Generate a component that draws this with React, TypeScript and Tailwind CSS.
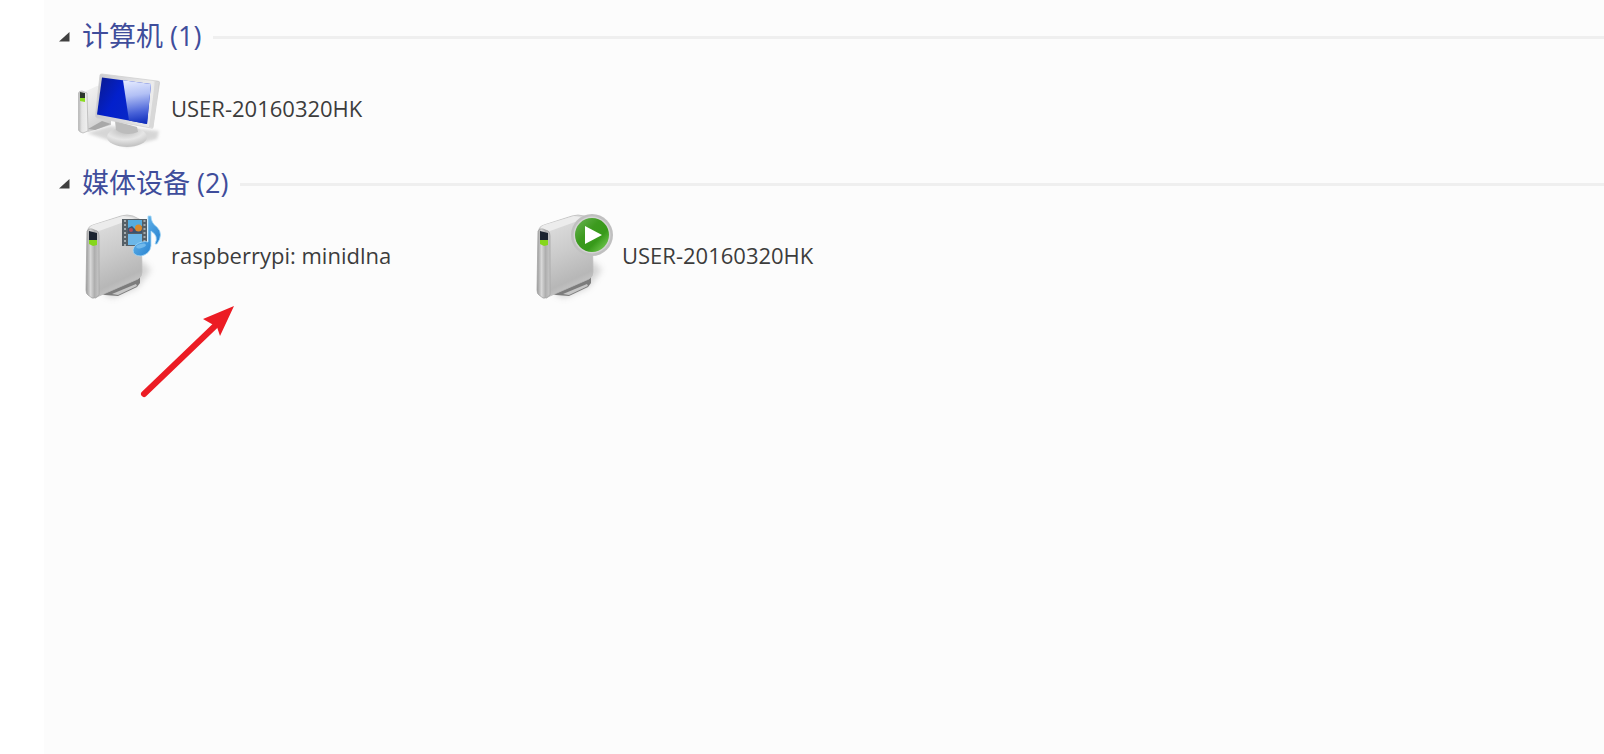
import { useState, type ReactNode } from 'react';

function ComputerIcon() {
  return (
    <svg viewBox="0 0 96 96" className="size-24 shrink-0" aria-hidden="true">
      <defs>
        <linearGradient id="pc-side" x1="0" x2="1">
          <stop offset="0" stopColor="#b4b4b4" />
          <stop offset=".35" stopColor="#e4e4e4" />
          <stop offset="1" stopColor="#f0f0f0" />
        </linearGradient>
        <linearGradient id="pc-tower" x1="0" y1="0" x2=".4" y2="1">
          <stop offset="0" stopColor="#f4f4f4" />
          <stop offset=".6" stopColor="#e2e2e2" />
          <stop offset="1" stopColor="#cdcdcd" />
        </linearGradient>
        <linearGradient id="pc-screen" x1="0" y1="0" x2="1" y2=".5">
          <stop offset="0" stopColor="#0a1a8c" />
          <stop offset=".45" stopColor="#0320cc" />
          <stop offset="1" stopColor="#0a2ac4" />
        </linearGradient>
        <linearGradient id="pc-glare" x1=".3" y1="0" x2=".4" y2="1">
          <stop offset="0" stopColor="#e4eaff" />
          <stop offset=".35" stopColor="#b2c0f5" />
          <stop offset=".75" stopColor="#4862d8" />
          <stop offset="1" stopColor="#1230bd" />
        </linearGradient>
        <linearGradient id="pc-frame" x1="0" x2="1">
          <stop offset="0" stopColor="#c9c9cd" />
          <stop offset=".9" stopColor="#ececec" />
          <stop offset="1" stopColor="#bdbdbd" />
        </linearGradient>
        <radialGradient id="pc-base" cx=".45" cy=".15" r=".8">
          <stop offset="0" stopColor="#b8b8b8" />
          <stop offset=".6" stopColor="#e6e6e6" />
          <stop offset="1" stopColor="#c4c4c4" />
        </radialGradient>
        <filter id="pc-soft" x="-30%" y="-30%" width="160%" height="160%">
          <feGaussianBlur stdDeviation="1.8" />
        </filter>
      </defs>
      <path d="M12 72 L35 65 L84 70 L82 78 L52 86 L36 80Z" fill="#aaa" opacity=".45" filter="url(#pc-soft)" />
      <path d="M9 31 L22 25 L36 26 L36 64 L13 71Z" fill="url(#pc-tower)" />
      <path d="M3.500 32 Q4 30 7 30 L12 32 L13 70 L8 72 Q4 71 3.500 69Z" fill="url(#pc-side)" stroke="#b8b8b8" strokeWidth=".8" />
      <path d="M13 68 L27 60 L36 63 L20 69Z" fill="#a8a8a8" />
      <path d="M5 31 L10 32 V37 L5 37Z" fill="#2c362c" />
      <path d="M5 37 H10 V41 L5 40Z" fill="#8bdc22" />
      <ellipse cx="52" cy="76" rx="20" ry="10" fill="url(#pc-base)" />
      <path d="M40 60 L62 66 L63 71 Q51 76 41 69Z" fill="#bcbcbc" />
      <path d="M25 14 Q25 13 27 13 L82 20 Q85 20 84.500 22 L78 66 Q78 68 76 67 L22 57 Q20 56 20.500 54Z" fill="url(#pc-frame)" stroke="#d0d0d0" strokeWidth=".8" />
      <path d="M80 21 L84 21 L78 67 L74 66Z" fill="#d8d8d8" />
      <path d="M27 16.500 L76 23 L72 63 L22 53.500Z" fill="url(#pc-screen)" />
      <path d="M48 19.300 L76 23 L72 63 L54 59.600Z" fill="url(#pc-glare)" />
    </svg>
  );
}

function DeviceIcon({ id, children }: { id: string; children: ReactNode }) {
  return (
    <svg viewBox="0 0 96 96" className="size-24 shrink-0 overflow-visible" aria-hidden="true">
      <defs>
        <linearGradient id={`${id}-front`} x1="0" x2="1">
          <stop offset="0" stopColor="#989898" />
          <stop offset=".35" stopColor="#d8d8d8" />
          <stop offset=".65" stopColor="#aeaeae" />
          <stop offset="1" stopColor="#c8c8c8" />
        </linearGradient>
        <linearGradient id={`${id}-body`} x1=".3" y1="0" x2=".6" y2="1">
          <stop offset="0" stopColor="#e0e0e0" />
          <stop offset=".45" stopColor="#cbcbcb" />
          <stop offset=".8" stopColor="#b7b7b7" />
          <stop offset="1" stopColor="#d2d2d2" />
        </linearGradient>
        <filter id={`${id}-soft`} x="-30%" y="-30%" width="160%" height="160%">
          <feGaussianBlur stdDeviation="3" />
        </filter>
      </defs>
      <path d="M28 86 L66 52 L76 62 L62 80 L38 90Z" fill="#999" opacity=".4" filter={`url(#${id}-soft)`} />
      <path d="M26 86 L65 68 V75 L62 79 L43 88 L30 87Z" fill="#7c7c7c" />
      <path d="M37 86 L61 76 L62 78 L43 87Z" fill="#c6c6c6" />
      <path d="M13 21 Q14 18 18 17 L46 8 Q52 6 58 8 L66 12 L67 64 Q67 69 63 71 L24 88 L20 90Z" fill={`url(#${id}-body)`} stroke="#bcbcbc" strokeWidth=".8" />
      <path d="M14 21 Q15 18 18 17 L48 8 L60 10 L24 23Z" fill="#ececec" />
      <path d="M12 23 Q13 20 17 21 L22 23 Q24 24 24 28 L24 87 Q21 91 17 90 L13 87 Q11 86 11 82Z" fill={`url(#${id}-front)`} stroke="#a4a4a4" strokeWidth=".8" />
      <path d="M14 23 L22 25 V32 H14Z" fill="#1c2430" />
      <path d="M14 32 H22 V37 L18 38 L14 36Z" fill="#86d71c" />
      {children}
    </svg>
  );
}

function MediaBadge() {
  return (
    <>
      <defs>
        <linearGradient id="note-blue" x1="0" x2="1" y2="1">
          <stop offset="0" stopColor="#7cc8f5" />
          <stop offset="1" stopColor="#1573c8" />
        </linearGradient>
      </defs>
      <rect x="47" y="11" width="25" height="27" fill="#555f66" />
      <rect x="53" y="12" width="14" height="12" fill="#55acdf" />
      <rect x="53" y="26" width="14" height="11" fill="#6cb7e8" />
      <path d="M53 20 L57 18 L60 21 L67 18 V25 H53Z" fill="#3b5370" />
      <circle cx="63.500" cy="20" r="3.500" fill="#d98a2e" />
      <circle cx="56" cy="22" r="2" fill="#b24a55" />
      <path d="M50 12 V38 M69.500 12 V38" stroke="#a3abaf" strokeWidth="2" strokeDasharray="2 2" />
      <path d="M73 8 L76 8 Q76 15 82 19 Q89 26 82 36 L80 36 Q84 28 76 23 V38 Q75 46 66 48 Q58 48 58 42 Q59 36 67 34 Q71 33 73 34Z" fill="url(#note-blue)" stroke="#a5d8f6" strokeWidth=".8" />
      <ellipse cx="66" cy="38" rx="5" ry="2" fill="#7dc2f0" opacity=".8" transform="rotate(-15 66 38)" />
    </>
  );
}

function PlayBadge() {
  return (
    <>
      <defs>
        <linearGradient id="play-green" x1="0" x2="1" y1="0" y2="1">
          <stop offset="0" stopColor="#6cb556" />
          <stop offset=".4" stopColor="#3c9a1e" />
          <stop offset=".65" stopColor="#379a1a" />
          <stop offset="1" stopColor="#86d862" />
        </linearGradient>
      </defs>
      <circle cx="66" cy="27" r="21" fill="#c0c0c0" />
      <circle cx="66" cy="27" r="18.500" fill="#d4d4d4" />
      <circle cx="66" cy="27" r="17" fill="url(#play-green)" />
      <path d="M59 18 L76 27 L59 36Z" fill="#fff" />
    </>
  );
}

function Item({ icon, label }: { icon: ReactNode; label: string }) {
  return (
    <li className="flex w-[451px]">
      <a href="#" className="flex items-center whitespace-nowrap text-[22px] leading-8 text-[#3c3c3c]">
        {icon}
        <span className="pb-0.5">{label}</span>
      </a>
    </li>
  );
}

function Group({ title, children }: { title: string; children: ReactNode }) {
  const [open, setOpen] = useState(true);
  return (
    <section>
      <h2 className="flex h-12 items-center gap-3">
        <button
          type="button"
          aria-expanded={open}
          onClick={() => setOpen(!open)}
          className="flex items-center gap-3 whitespace-nowrap text-[27px] leading-8 text-[#3f4d9b]"
        >
          <svg viewBox="0 0 11 10" className="w-[11px]" aria-hidden="true">
            <path d="M10.500 0 V9.500 H0Z" fill="#404040" />
          </svg>
          <span className="pb-0.5">{title}</span>
        </button>
        <span className="h-[3px] flex-1 bg-[#efefef]" />
      </h2>
      {open && <ul className="flex flex-wrap pl-4">{children}</ul>}
    </section>
  );
}

export default function App() {
  return (
    <div className="min-h-screen bg-white pl-11 font-['Open_Sans','Noto_Sans_CJK_SC',sans-serif]">
      <main className="relative flex min-h-screen flex-col gap-[3px] bg-[#fcfcfc] pl-[15px] pt-[13px]">
        <Group title="计算机 (1)">
          <Item icon={<ComputerIcon />} label="USER-20160320HK" />
        </Group>
        <Group title="媒体设备 (2)">
          <Item icon={<DeviceIcon id="dlna"><MediaBadge /></DeviceIcon>} label="raspberrypi: minidlna" />
          <Item icon={<DeviceIcon id="player"><PlayBadge /></DeviceIcon>} label="USER-20160320HK" />
        </Group>
        <svg viewBox="0 0 96 96" className="pointer-events-none absolute left-24 top-[304px] size-24" aria-hidden="true">
          <path d="M4 90 L76 21" stroke="#ec1c24" strokeWidth="6" strokeLinecap="round" />
          <path d="M94 2 L80 32 L77 23 L63 15Z" fill="#ec1c24" />
        </svg>
      </main>
    </div>
  );
}
